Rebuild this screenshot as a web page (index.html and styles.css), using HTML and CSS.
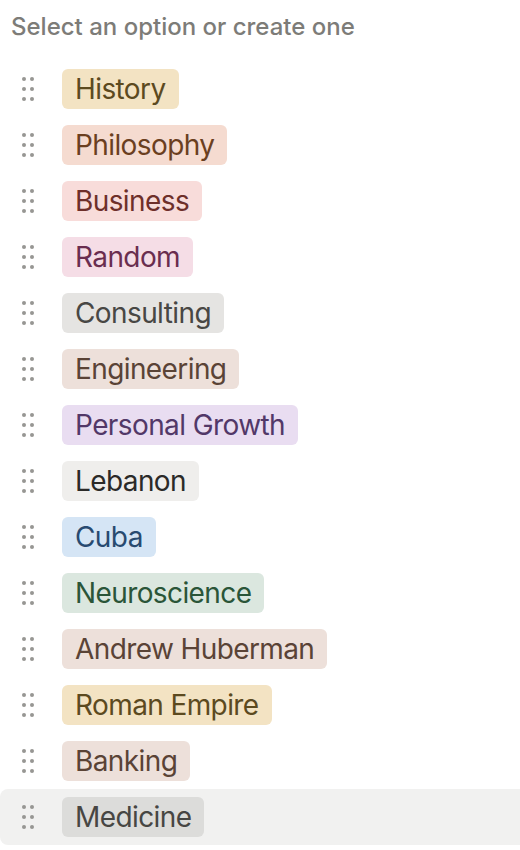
FILE: index.html
```html
<!DOCTYPE html>
<html>
	<head>
		<meta charset="utf-8">
		<title>Select an option</title>
		<link rel="stylesheet" href="styles.css">
	</head>
	<body>
		<div id="menu">
			<div class="title">Select an option or create one</div>

			<div class="options">
				<div class="option">
					<svg class="handle" width="12" height="24" viewBox="0 0 12 24"><circle cx="2" cy="2" r="2"/><circle cx="10" cy="2" r="2"/><circle cx="2" cy="12" r="2"/><circle cx="10" cy="12" r="2"/><circle cx="2" cy="22" r="2"/><circle cx="10" cy="22" r="2"/></svg>
					<span class="tag yellow">History</span>
				</div>
				<div class="option">
					<svg class="handle" width="12" height="24" viewBox="0 0 12 24"><circle cx="2" cy="2" r="2"/><circle cx="10" cy="2" r="2"/><circle cx="2" cy="12" r="2"/><circle cx="10" cy="12" r="2"/><circle cx="2" cy="22" r="2"/><circle cx="10" cy="22" r="2"/></svg>
					<span class="tag orange">Philosophy</span>
				</div>
				<div class="option">
					<svg class="handle" width="12" height="24" viewBox="0 0 12 24"><circle cx="2" cy="2" r="2"/><circle cx="10" cy="2" r="2"/><circle cx="2" cy="12" r="2"/><circle cx="10" cy="12" r="2"/><circle cx="2" cy="22" r="2"/><circle cx="10" cy="22" r="2"/></svg>
					<span class="tag red">Business</span>
				</div>
				<div class="option">
					<svg class="handle" width="12" height="24" viewBox="0 0 12 24"><circle cx="2" cy="2" r="2"/><circle cx="10" cy="2" r="2"/><circle cx="2" cy="12" r="2"/><circle cx="10" cy="12" r="2"/><circle cx="2" cy="22" r="2"/><circle cx="10" cy="22" r="2"/></svg>
					<span class="tag pink">Random</span>
				</div>
				<div class="option">
					<svg class="handle" width="12" height="24" viewBox="0 0 12 24"><circle cx="2" cy="2" r="2"/><circle cx="10" cy="2" r="2"/><circle cx="2" cy="12" r="2"/><circle cx="10" cy="12" r="2"/><circle cx="2" cy="22" r="2"/><circle cx="10" cy="22" r="2"/></svg>
					<span class="tag gray">Consulting</span>
				</div>
				<div class="option">
					<svg class="handle" width="12" height="24" viewBox="0 0 12 24"><circle cx="2" cy="2" r="2"/><circle cx="10" cy="2" r="2"/><circle cx="2" cy="12" r="2"/><circle cx="10" cy="12" r="2"/><circle cx="2" cy="22" r="2"/><circle cx="10" cy="22" r="2"/></svg>
					<span class="tag brown">Engineering</span>
				</div>
				<div class="option">
					<svg class="handle" width="12" height="24" viewBox="0 0 12 24"><circle cx="2" cy="2" r="2"/><circle cx="10" cy="2" r="2"/><circle cx="2" cy="12" r="2"/><circle cx="10" cy="12" r="2"/><circle cx="2" cy="22" r="2"/><circle cx="10" cy="22" r="2"/></svg>
					<span class="tag purple">Personal Growth</span>
				</div>
				<div class="option">
					<svg class="handle" width="12" height="24" viewBox="0 0 12 24"><circle cx="2" cy="2" r="2"/><circle cx="10" cy="2" r="2"/><circle cx="2" cy="12" r="2"/><circle cx="10" cy="12" r="2"/><circle cx="2" cy="22" r="2"/><circle cx="10" cy="22" r="2"/></svg>
					<span class="tag default">Lebanon</span>
				</div>
				<div class="option">
					<svg class="handle" width="12" height="24" viewBox="0 0 12 24"><circle cx="2" cy="2" r="2"/><circle cx="10" cy="2" r="2"/><circle cx="2" cy="12" r="2"/><circle cx="10" cy="12" r="2"/><circle cx="2" cy="22" r="2"/><circle cx="10" cy="22" r="2"/></svg>
					<span class="tag blue">Cuba</span>
				</div>
				<div class="option">
					<svg class="handle" width="12" height="24" viewBox="0 0 12 24"><circle cx="2" cy="2" r="2"/><circle cx="10" cy="2" r="2"/><circle cx="2" cy="12" r="2"/><circle cx="10" cy="12" r="2"/><circle cx="2" cy="22" r="2"/><circle cx="10" cy="22" r="2"/></svg>
					<span class="tag green">Neuroscience</span>
				</div>
				<div class="option">
					<svg class="handle" width="12" height="24" viewBox="0 0 12 24"><circle cx="2" cy="2" r="2"/><circle cx="10" cy="2" r="2"/><circle cx="2" cy="12" r="2"/><circle cx="10" cy="12" r="2"/><circle cx="2" cy="22" r="2"/><circle cx="10" cy="22" r="2"/></svg>
					<span class="tag brown">Andrew Huberman</span>
				</div>
				<div class="option">
					<svg class="handle" width="12" height="24" viewBox="0 0 12 24"><circle cx="2" cy="2" r="2"/><circle cx="10" cy="2" r="2"/><circle cx="2" cy="12" r="2"/><circle cx="10" cy="12" r="2"/><circle cx="2" cy="22" r="2"/><circle cx="10" cy="22" r="2"/></svg>
					<span class="tag yellow">Roman Empire</span>
				</div>
				<div class="option">
					<svg class="handle" width="12" height="24" viewBox="0 0 12 24"><circle cx="2" cy="2" r="2"/><circle cx="10" cy="2" r="2"/><circle cx="2" cy="12" r="2"/><circle cx="10" cy="12" r="2"/><circle cx="2" cy="22" r="2"/><circle cx="10" cy="22" r="2"/></svg>
					<span class="tag brown">Banking</span>
				</div>
				<div class="option hover">
					<svg class="handle" width="12" height="24" viewBox="0 0 12 24"><circle cx="2" cy="2" r="2"/><circle cx="10" cy="2" r="2"/><circle cx="2" cy="12" r="2"/><circle cx="10" cy="12" r="2"/><circle cx="2" cy="22" r="2"/><circle cx="10" cy="22" r="2"/></svg>
					<span class="tag hovergray">Medicine</span>
				</div>
			</div>
		</div>
	</body>
</html>
```

FILE: styles.css
```css
body {
	margin: 0;
	padding: 0;
	background: #fff;
	font-family: Inter, "Noto Sans", sans-serif;
	overflow: hidden;
}

#menu {
	width: 100%;
}

#menu .title {
	padding: 13px 0 20px 11px;
	font-size: 24px;
	line-height: 28px;
	font-weight: 500;
	color: #7d7c78;
}

.option {
	display: flex;
	align-items: center;
	gap: 28px;
	height: 56px;
	padding-left: 22px;
	margin-right: -12px;
	border-radius: 8px;
}

.option.hover {
	background: #f1f1f0;
}

.handle {
	flex: none;
	fill: #979693;
}

.tag {
	display: inline-block;
	height: 40px;
	padding: 0 13px;
	border-radius: 6px;
	font-size: 28px;
	line-height: 41px;
	letter-spacing: -0.6px;
	white-space: nowrap;
}

.tag.yellow { background: #f3e3c3; color: #5c4a1f; }
.tag.orange { background: #f5dbd0; color: #6b3f1f; }
.tag.red { background: #f8dcda; color: #6e2f2a; }
.tag.pink { background: #f5dde6; color: #6a2d4f; }
.tag.gray { background: #e5e4e2; color: #484744; }
.tag.brown { background: #ede0da; color: #5a4336; }
.tag.purple { background: #e9ddf1; color: #523868; }
.tag.default { background: #efeeec; color: #2b2a28; }
.tag.blue { background: #d5e5f5; color: #284a70; }
.tag.green { background: #dbe7df; color: #2a5538; }
.tag.hovergray { background: #dcdcda; color: #474643; }
```
